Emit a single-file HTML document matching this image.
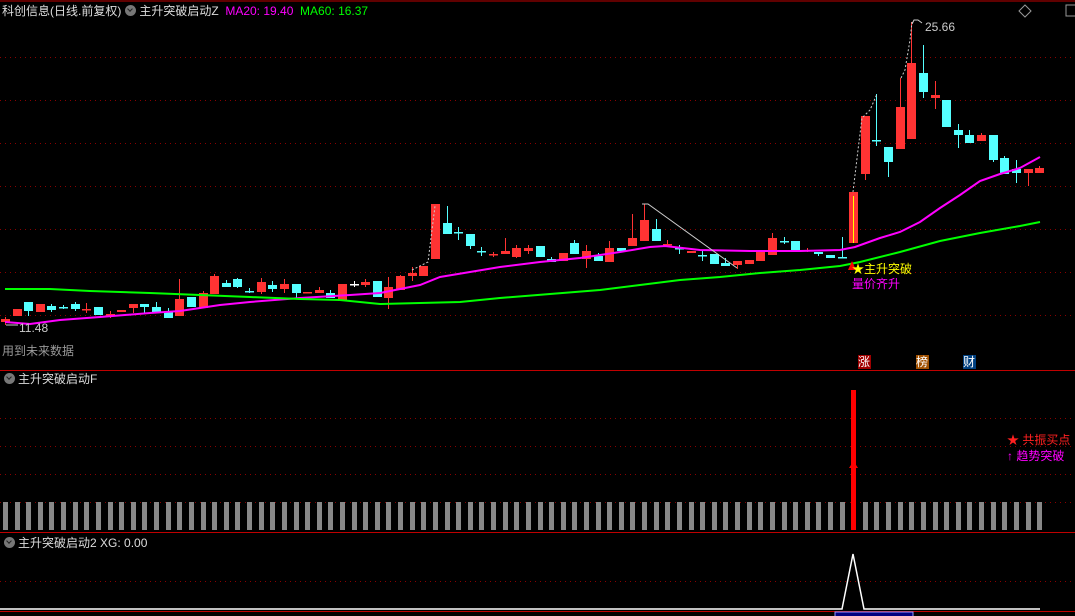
<!DOCTYPE html>
<html><head><meta charset="utf-8"><style>
body{margin:0;background:#000;width:1075px;height:616px;overflow:hidden;font-family:"Liberation Sans","Noto Sans CJK SC",sans-serif}
svg{position:absolute;left:0;top:0}
.t{position:absolute;font-size:12px;white-space:nowrap;line-height:14px}
.ic{display:inline-block;width:11px;height:11px;border-radius:50%;background:#777;vertical-align:-1px;margin:0 3px 0 4px;position:relative}
.ic:after{content:"";position:absolute;left:3px;top:2px;width:3px;height:3px;border-right:1.5px solid #222;border-bottom:1.5px solid #222;transform:rotate(45deg)}
</style></head><body>
<svg id="s" width="1075" height="616" xmlns="http://www.w3.org/2000/svg">
<g stroke="#8a0000" stroke-dasharray="1,4" stroke-width="1">
<line x1="0" y1="57.5" x2="1075" y2="57.5"/><line x1="0" y1="100.5" x2="1075" y2="100.5"/><line x1="0" y1="143.5" x2="1075" y2="143.5"/><line x1="0" y1="186.5" x2="1075" y2="186.5"/><line x1="0" y1="229.5" x2="1075" y2="229.5"/><line x1="0" y1="272.5" x2="1075" y2="272.5"/><line x1="0" y1="315.5" x2="1075" y2="315.5"/>
<line x1="0" y1="418.5" x2="1075" y2="418.5"/><line x1="0" y1="446.5" x2="1075" y2="446.5"/><line x1="0" y1="474.5" x2="1075" y2="474.5"/><line x1="0" y1="502.5" x2="1075" y2="502.5"/>
<line x1="0" y1="581.5" x2="1075" y2="581.5"/>
</g>
<line x1="0" y1="1" x2="1075" y2="1" stroke="#c00000"/>
<line x1="0" y1="370.5" x2="1075" y2="370.5" stroke="#c00000"/>
<line x1="0" y1="532.5" x2="1075" y2="532.5" stroke="#c00000"/>
<line x1="0" y1="611.5" x2="1075" y2="611.5" stroke="#c00000"/>
<g id="g"></g>
<polyline fill="none" stroke="#ff00ff" stroke-width="2" points="5,322 30,324 60,320 100,317 150,313 180,311 220,305 250,302 300,298 350,295 380,293 420,285 440,277 470,272 500,267 540,262 580,258 620,252 650,247 665,246 700,250 750,251 800,251 840,250 855,247 880,238 900,232 920,222 940,208 960,195 980,181 1000,174 1020,168 1040,157"/>
<polyline fill="none" stroke="#00ff00" stroke-width="2" points="5,289 50,289 90,291 150,293 200,295 250,297 300,299 340,300 380,304 420,303 460,302 500,298 550,294 600,290 640,285 680,280 720,277 760,273 800,270 840,266 860,262 900,252 940,241 980,233 1020,226 1040,222"/>
<g fill="none" stroke="#ccc" stroke-dasharray="2,2">
<polyline points="412,270 420,266 428,262 432,230 435,206"/>
<polyline points="853,192 858,150 862,118 870,110 877,94"/>
<polyline points="901,78 905,70 910,40 912,22"/>
</g>
<polyline fill="none" stroke="#ccc" points="642,204 648,204 737,268"/>
<polyline fill="none" stroke="#ccc" points="912,24 914,20 918,20 922,23"/>
<polyline fill="none" stroke="#ccc" points="18,325 6,325 M10,321 6,325 10,329"/>
<polygon points="1025,5 1031,11 1025,17 1019,11" fill="none" stroke="#999"/>
<rect x="1066" y="5" width="12" height="11" fill="none" stroke="#999"/>
<rect x="851" y="390" width="5" height="140" fill="#ff0000"/>
<polygon points="853.5,461 849,468 858,468" fill="#ff0000"/>
<polyline fill="none" stroke="#fff" stroke-width="1.5" points="0,609 842,609 853,554 864,609 1040,609"/>
<polygon points="852,261 848,270 856,270" fill="#ff0000"/>
<rect x="835" y="612" width="78" height="6" fill="#000080" stroke="#99f"/>
</svg>
<div class="t" style="left:2px;top:4px;color:#ddd">科创信息(日线.前复权)<span class="ic"></span>主升突破启动Z&nbsp; <span style="color:#ff00ff">MA20: 19.40</span>&nbsp; <span style="color:#00ff00">MA60: 16.37</span></div>
<div class="t" style="left:19px;top:321px;color:#ccc">11.48</div>
<div class="t" style="left:925px;top:20px;color:#ccc">25.66</div>
<div class="t" style="left:2px;top:344px;color:#999">用到未来数据</div>
<div class="t" style="left:852px;top:262px;color:#ffff00"><span style="color:#ff0">★</span>主升突破</div>
<div class="t" style="left:852px;top:277px;color:#ff00ff">量价齐升</div>
<div class="t" style="left:858px;top:355px;width:13px;background:#a00000;color:#fff">涨</div>
<div class="t" style="left:916px;top:355px;width:13px;background:#a05000;color:#fff">榜</div>
<div class="t" style="left:963px;top:355px;width:13px;background:#004080;color:#fff">财</div>
<div class="t" style="left:0px;top:372px;color:#ddd"><span class="ic"></span>主升突破启动F</div>
<div class="t" style="left:1007px;top:433px;color:#ff2020">★ 共振买点</div>
<div class="t" style="left:1007px;top:449px;color:#ff00ff">↑ 趋势突破</div>
<div class="t" style="left:0px;top:536px;color:#ddd"><span class="ic"></span>主升突破启动2 XG: 0.00</div>
<script>
var C=[
['r',319,322,317,325],['r',309,316,309,316],['c',302,311,302,316],['r',304,312,304,312],['c',306,310,304,312],['c',307,307,305,309],['c',304,309,302,311],['r',309,309,303,313],['c',307,315,307,315],['r',314,314,311,318],
['r',310,312,310,312],['r',304,308,304,313],['c',304,307,304,313],['c',307,312,302,312],['c',312,318,308,318],['r',299,316,279,316],['c',297,307,297,307],['r',293,308,291,308],['r',276,294,274,294],['c',283,287,280,287],
['c',279,287,278,288],['c',291,291,288,293],['r',282,292,278,294],['c',285,289,281,292],['r',284,289,279,293],['c',284,293,284,298],['r',292,293,292,293],['r',290,293,287,293],['c',293,298,290,298],['r',284,301,284,301],
['w',284,284,281,287],['r',282,285,279,287],['c',281,297,281,297],['r',287,298,277,309],['r',276,290,275,290],['r',273,276,267,281],['r',266,276,266,276],['r',204,259,204,259],['c',223,234,206,234],['c',232,232,227,240],
['c',234,246,234,249],['c',251,251,247,256],['r',254,254,252,257],['r',251,254,238,254],['r',248,257,245,258],['r',248,251,245,254],['c',246,257,246,257],['c',259,262,257,262],['r',253,261,253,261],['c',243,254,240,254],
['r',251,259,245,268],['c',256,261,253,261],['r',248,262,241,262],['c',248,251,248,251],['r',238,246,214,246],['r',220,241,204,241],['c',229,241,219,241],['r',244,244,240,247],['c',248,248,245,254],['r',251,253,251,253],
['c',255,255,251,261],['c',254,264,254,264],['c',263,266,258,266],['r',261,265,261,269],['r',260,264,260,264],['r',252,261,252,261],['r',238,255,233,255],['c',241,241,237,244],['c',241,252,241,252],['r',250,250,248,252],
['c',252,254,252,256],['c',255,258,255,258],['c',257,257,237,257],['r',192,243,192,243],['r',116,174,116,180],['c',140,140,94,146],['c',147,162,147,177],['r',107,149,78,149],['r',63,139,22,139],['c',73,92,45,98],
['r',95,98,81,109],['c',100,127,100,127],['c',130,135,124,148],['c',135,143,130,143],['r',135,141,133,141],['c',135,160,135,162],['c',158,174,156,174],['c',169,173,160,183],['r',169,173,169,186],['r',168,173,166,173]];
var h='';
for(var i=0;i<C.length;i++){var d=C[i],x=Math.round(5+i*11.62),col=d[0]=='r'?'#ff3333':(d[0]=='c'?'#55ffff':'#ffffff');
h+='<line x1="'+(x+.5)+'" y1="'+d[3]+'" x2="'+(x+.5)+'" y2="'+d[4]+'" stroke="'+col+'"/>';
var hh=d[2]-d[1];
if(hh<2)h+='<rect x="'+(x-4)+'" y="'+d[1]+'" width="9" height="1.5" fill="'+col+'"/>';
else h+='<rect x="'+(x-4)+'" y="'+d[1]+'" width="9" height="'+hh+'" fill="'+col+'"/>';
if(i!=73)h+='<rect x="'+(x-2)+'" y="502" width="5" height="28" fill="#888"/>';}
h+='<line x1="853.5" y1="196" x2="853.5" y2="243" stroke="#ffff00"/>';
document.getElementById('g').innerHTML=h;
</script>
</body></html>
